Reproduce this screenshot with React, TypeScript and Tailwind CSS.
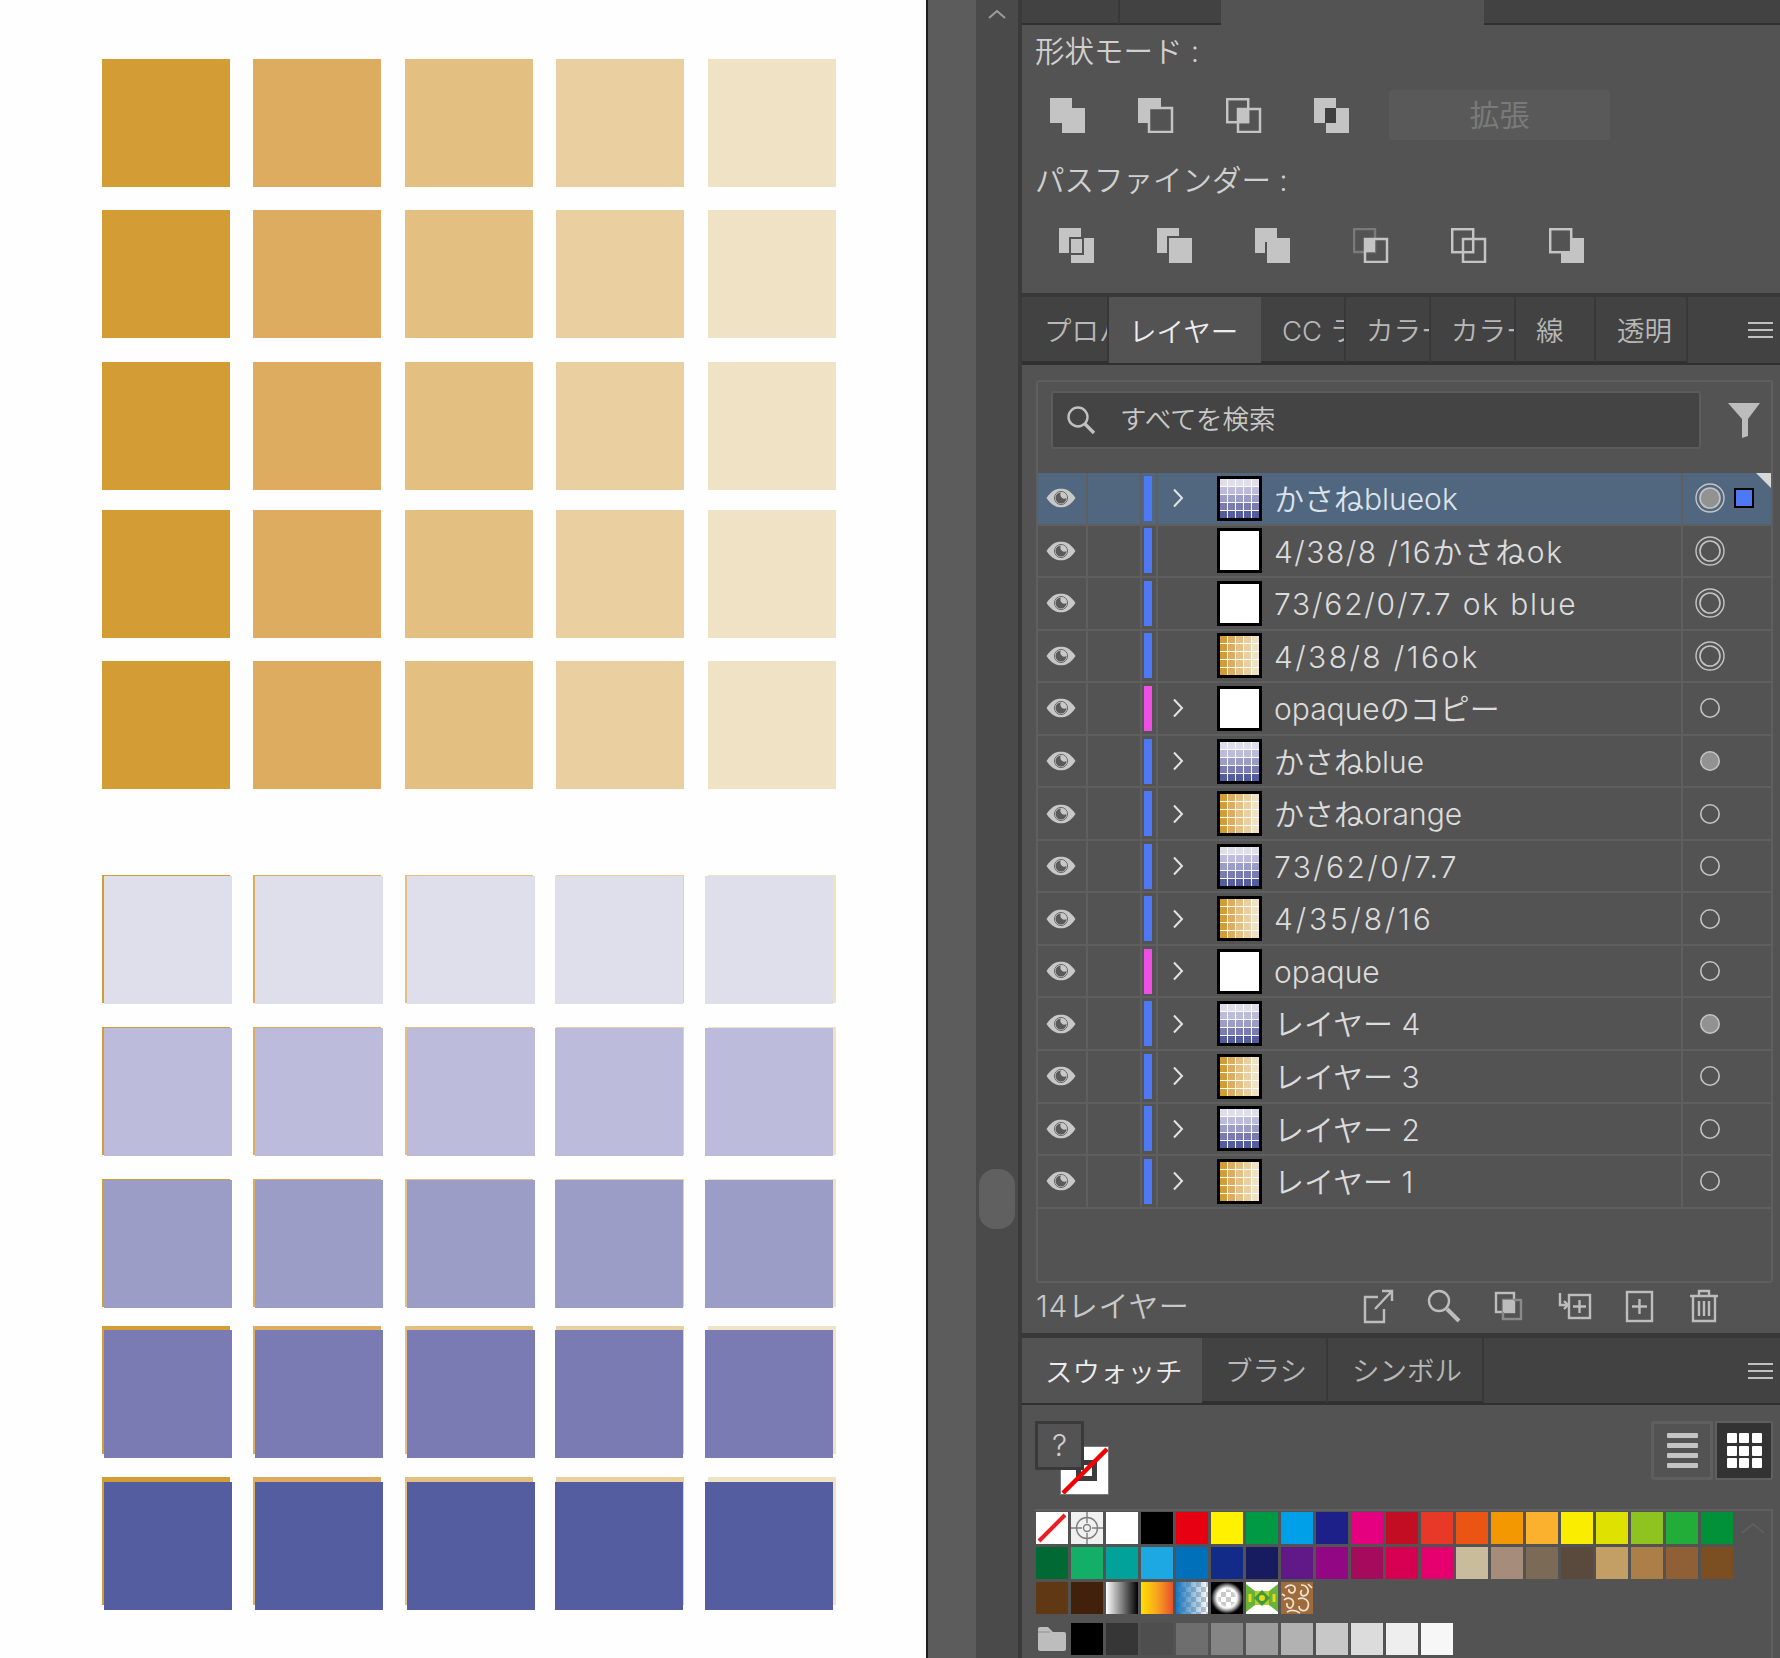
import React from "react";

const orange = ["bg-[#d49c35]", "bg-[#ddac60]", "bg-[#e3bf81]", "bg-[#eacfa0]", "bg-[#f0e2c5]"];
const blue = ["bg-[#dfdfec]", "bg-[#bdbbdb]", "bg-[#9c9dc7]", "bg-[#7a7bb3]", "bg-[#535da0]"];
const topRows = ["mt-0", "mt-[23px]", "mt-[24px]", "mt-[20px]", "mt-[23px]"];
const lowRows = [
  { mt: "mt-0", top: "top-[1px]" },
  { mt: "mt-[24px]", top: "top-[1px]" },
  { mt: "mt-[24px]", top: "top-[1px]" },
  { mt: "mt-[19px]", top: "top-[4px]" },
  { mt: "mt-[23px]", top: "top-[5px]" },
];
const lowLeft = ["left-[2px]", "left-[2px]", "left-[2px]", "left-[-1px]", "left-[-3px]"];

function Canvas() {
  return (
    <div className="w-[926px] h-full shrink-0 bg-[#fefefe] pl-[101.9px] pt-[59px]">
      {topRows.map((mt, r) => (
        <div key={r} className={`grid grid-cols-[repeat(5,128px)] gap-x-[23.5px] ${mt}`}>
          {orange.map((c, i) => (
            <div key={i} className={`h-[128px] ${c}`} />
          ))}
        </div>
      ))}
      <div className="mt-[86px]">
        {lowRows.map((row, r) => (
          <div key={r} className={`grid grid-cols-[repeat(5,128px)] gap-x-[23.5px] ${row.mt}`}>
            {orange.map((c, i) => (
              <div key={i} className={`relative h-[128px] ${c}`}>
                <div className={`absolute w-[128px] h-[128px] ${row.top} ${lowLeft[i]} ${blue[r]}`} />
              </div>
            ))}
          </div>
        ))}
      </div>
    </div>
  );
}

const L = "#c4c4c4";
const D = "#535353";

function Shape({ children }: { children: React.ReactNode }) {
  return (
    <svg width="36" height="35" viewBox="0 0 36 35" className="shrink-0">
      {children}
    </svg>
  );
}

const shapeModes = [
  <Shape key="a">
    <path d="M0 0H22V10H35V35H12V25H0Z" fill={L} />
  </Shape>,
  <Shape key="b">
    <rect x="0" y="0" width="23" height="25" fill={L} />
    <rect x="11" y="10" width="23" height="24" fill={D} stroke={L} strokeWidth="2.5" />
  </Shape>,
  <Shape key="c">
    <rect x="1.2" y="1.2" width="21" height="23" fill="none" stroke={L} strokeWidth="2.5" />
    <rect x="12" y="11" width="22" height="23" fill="none" stroke={L} strokeWidth="2.5" />
    <rect x="12" y="11" width="10" height="13" fill={L} />
  </Shape>,
  <Shape key="d">
    <path d="M0 0H22V10H35V35H12V25H0Z" fill={L} />
    <rect x="11" y="10" width="11" height="15" fill="#3f3f3f" />
  </Shape>,
];

const pathfinders = [
  <Shape key="a">
    <path d="M0 0H22V9H10V25H0Z" fill={L} />
    <path d="M25 10H35V35H12V27H25Z" fill={L} />
    <rect x="12" y="11" width="11" height="14" fill={L} />
  </Shape>,
  <Shape key="b">
    <path d="M0 0H22V8H10V25H0Z" fill={L} />
    <rect x="12" y="10" width="23" height="25" fill={L} />
  </Shape>,
  <Shape key="c">
    <path d="M0 0H22V10H35V35H12V14H10V25H0Z" fill={L} />
  </Shape>,
  <Shape key="d">
    <rect x="1" y="1" width="21" height="23" fill="none" stroke="#7a7a7a" strokeWidth="2.5" />
    <rect x="12" y="11" width="22" height="23" fill="none" stroke={L} strokeWidth="2.5" />
    <rect x="11" y="10" width="11" height="14" fill={L} />
  </Shape>,
  <Shape key="e">
    <rect x="1.2" y="1.2" width="21" height="23" fill="none" stroke={L} strokeWidth="2.5" />
    <rect x="12" y="11" width="22" height="23" fill="none" stroke={L} strokeWidth="2.5" />
    <rect x="12" y="11" width="10" height="13" fill="none" stroke={L} strokeWidth="2" />
  </Shape>,
  <Shape key="f">
    <rect x="12" y="10" width="23" height="25" fill={L} />
    <rect x="1.2" y="1.2" width="21" height="23" fill={D} stroke={L} strokeWidth="2.5" />
  </Shape>,
];

function PathfinderPanel() {
  return (
    <div className="h-[268px] bg-[#535353] pl-[13px] pt-[10px] shrink-0">
      <div className="text-[29.5px] leading-[32px] text-[#d0d0d0] font-[350]">形状モード :</div>
      <div className="flex items-center h-[50px] mt-[23px]">
        <div className="flex items-center pl-[15px] gap-[52px] w-[354px]">{shapeModes}</div>
        <div className="w-[221px] h-[50px] rounded-[3px] bg-[#595959] flex items-center justify-center text-[30px] text-[#7a7a7a]">
          拡張
        </div>
      </div>
      <div className="text-[29.5px] leading-[32px] text-[#d0d0d0] font-[350] mt-[24px]">パスファインダー :</div>
      <div className="flex items-center pl-[24px] gap-[62px] mt-[32px]">{pathfinders}</div>
    </div>
  );
}

function Tab({ w, active, children }: { w: string; active?: boolean; children: React.ReactNode }) {
  return (
    <div
      className={`${w} h-full shrink-0 overflow-hidden whitespace-nowrap flex items-center pt-[5px] ${
        active
          ? "bg-[#535353] text-[#ececec]"
          : "bg-[#424242] text-[#b8b8b8] border-r-2 border-r-[#383838] border-b-2 border-b-[#303030]"
      }`}
    >
      {children}
    </div>
  );
}

function Menu() {
  return (
    <div className="absolute right-[7px] top-1/2 -translate-y-1/2 flex flex-col gap-[5px]">
      <div className="w-[25px] h-[2px] bg-[#c0c0c0]" />
      <div className="w-[25px] h-[2px] bg-[#c0c0c0]" />
      <div className="w-[25px] h-[2px] bg-[#c0c0c0]" />
    </div>
  );
}

function Eye() {
  return (
    <svg width="30" height="20" viewBox="0 0 30 20">
      <path d="M0.5 10C6 2 10.5 0.8 15 0.8S24 2 29.5 10C24 18 19.5 19.2 15 19.2S6 18 0.5 10Z" fill="#c8c8c8" />
      <circle cx="15" cy="10" r="6.6" fill="#c8c8c8" stroke="#6c6c6c" strokeWidth="1" />
      <path d="M15 4.5A5.5 5.5 0 1 0 20.5 10A4 4 0 0 1 15 4.5Z" fill="#5a5a5a" />
    </svg>
  );
}

function Thumb({ kind }: { kind: "blue" | "orange" | "white" }) {
  const cells = Array.from({ length: 25 }, (_, i) => i);
  if (kind === "white") {
    return <div className="w-[45px] h-[45px] shrink-0 border-[3px] border-black bg-white" />;
  }
  return (
    <div className="w-[45px] h-[45px] shrink-0 border-[3px] border-black bg-white">
      <div className="grid grid-cols-5 grid-rows-5 gap-[1px] w-full h-full">
        {cells.map((i) => (
          <div key={i} className={kind === "blue" ? blue[Math.floor(i / 5)] : orange[i % 5]} />
        ))}
      </div>
    </div>
  );
}

function Target({ mode, fill }: { mode: "double" | "single"; fill?: boolean }) {
  return (
    <svg width="30" height="30" viewBox="0 0 30 30">
      {mode === "double" && <circle cx="15" cy="15" r="14" fill="none" stroke="#c4c4c4" strokeWidth="1.4" />}
      <circle
        cx="15"
        cy="15"
        r={mode === "double" ? 10 : 9.2}
        fill={fill ? "#929292" : "none"}
        stroke="#c4c4c4"
        strokeWidth="1.6"
      />
    </svg>
  );
}

type Layer = {
  name: string;
  thumb: "blue" | "orange" | "white";
  arrow: boolean;
  bar?: string;
  target: "double" | "single";
  fill?: boolean;
  spread?: string;
};

const layers: Layer[] = [
  { name: "かさねblueok", thumb: "blue", arrow: true, target: "double", fill: true },
  { name: "4/38/8 /16かさねok", thumb: "white", arrow: false, target: "double", spread: "tracking-[1.5px]" },
  { name: "73/62/0/7.7 ok blue", thumb: "white", arrow: false, target: "double", spread: "tracking-[1.8px]" },
  { name: "4/38/8 /16ok", thumb: "orange", arrow: false, target: "double", spread: "tracking-[2.4px]" },
  { name: "opaqueのコピー", thumb: "white", arrow: true, bar: "bg-[#f04fe6]", target: "single" },
  { name: "かさねblue", thumb: "blue", arrow: true, target: "single", fill: true },
  { name: "かさねorange", thumb: "orange", arrow: true, target: "single" },
  { name: "73/62/0/7.7", thumb: "blue", arrow: true, target: "single", spread: "tracking-[2.4px]" },
  { name: "4/35/8/16", thumb: "orange", arrow: true, target: "single", spread: "tracking-[2.8px]" },
  { name: "opaque", thumb: "white", arrow: true, bar: "bg-[#f04fe6]", target: "single" },
  { name: "レイヤー 4", thumb: "blue", arrow: true, target: "single", fill: true },
  { name: "レイヤー 3", thumb: "orange", arrow: true, target: "single" },
  { name: "レイヤー 2", thumb: "blue", arrow: true, target: "single" },
  { name: "レイヤー 1", thumb: "orange", arrow: true, target: "single" },
];

function LayerRow({ layer, selected }: { layer: Layer; selected: boolean }) {
  return (
    <div
      className={`relative flex items-stretch h-[52.55px] border-b-2 border-b-[#5f5f5f] ${
        selected ? "bg-[#50677f]" : "bg-[#535353]"
      }`}
    >
      <div className="w-[50px] shrink-0 flex items-center justify-center pr-[2px] border-r-2 border-r-[#5f5f5f]">
        <Eye />
      </div>
      <div className="w-[54px] shrink-0 border-r-2 border-r-[#5f5f5f]" />
      <div className="w-[16px] shrink-0 flex items-center pl-[2px] border-r-2 border-r-[#5f5f5f]">
        <div className={`w-[8px] h-[45px] ${layer.bar ?? "bg-[#4d79f5]"}`} />
      </div>
      <div className="w-[59px] shrink-0 flex items-center pl-[14px]">
        {layer.arrow && (
          <svg width="12" height="20" viewBox="0 0 12 20">
            <path d="M2 1.5L10 10L2 18.5" fill="none" stroke="#e2e2e2" strokeWidth="2" />
          </svg>
        )}
      </div>
      <div className="flex items-center shrink-0">
        <Thumb kind={layer.thumb} />
      </div>
      <div
        className={`flex-1 pl-[12px] text-[30px] leading-[52px] font-[350] whitespace-nowrap ${layer.spread ?? ""} ${
          selected ? "text-[#dde3ea]" : "text-[#dcdcdc]"
        }`}
      >
        {layer.name}
      </div>
      <div className="w-[90px] shrink-0 flex items-center pl-[12px] border-l-2 border-l-[#5f5f5f]">
        <Target mode={layer.target} fill={layer.fill} />
        {selected && <div className="ml-[9px] w-[20px] h-[20px] border-[2px] border-black bg-[#4d79f5]" />}
      </div>
      {selected && (
        <div className="absolute right-0 top-0 w-0 h-0 border-l-[15px] border-l-transparent border-t-[15px] border-t-[#d8d8d8]" />
      )}
    </div>
  );
}

function Ico({ children }: { children: React.ReactNode }) {
  return (
    <svg width="36" height="36" viewBox="0 0 36 36" fill="none" stroke="#bdbdbd" strokeWidth="2.4" className="shrink-0">
      {children}
    </svg>
  );
}

function LayersPanel() {
  return (
    <div className="h-[968px] bg-[#535353] shrink-0 flex flex-col">
      <div className="mt-[15px] ml-[14px] mr-[7px] h-[903px] rounded-[3px] border-2 border-[#5f5f5f] shrink-0">
        <div className="h-[91px] flex items-start pl-[13px] pt-[9px]">
          <div className="w-[650px] h-[58px] bg-[#444444] rounded-[3px] border-2 border-[#5c5c5c] flex items-center pl-[13px]">
            <svg width="30" height="30" viewBox="0 0 30 30" fill="none" stroke="#c0c0c0" strokeWidth="2.4">
              <circle cx="12" cy="12" r="9.5" />
              <path d="M19 19L28 28" strokeWidth="3.4" />
            </svg>
            <span className="ml-[24px] text-[26.5px] font-[350] text-[#c8c8c8]">すべてを検索</span>
          </div>
          <svg width="32" height="36" viewBox="0 0 32 36" className="ml-[27px] mt-[11px]">
            <path d="M0 1H32L20 17V34L14 36V17Z" fill="#bcbcbc" />
          </svg>
        </div>
        {layers.map((l, i) => (
          <LayerRow key={i} layer={l} selected={i === 0} />
        ))}
      </div>
      <div className="relative flex-1 flex items-start pl-[14px] text-[#c8c8c8] text-[30px] leading-[46px] font-[350] tracking-[0.6px] whitespace-nowrap">
        14レイヤー
        <div className="absolute left-[339px] top-[5px] flex items-center gap-[29px]">
          <Ico>
            <path d="M17 9H4V34H23V21" />
            <path d="M14 21L30 4M21 3H31V13" />
          </Ico>
          <Ico>
            <circle cx="13" cy="13" r="10" />
            <path d="M21 21L33 33" strokeWidth="4" />
          </Ico>
          <Ico>
            <rect x="5" y="5" width="18" height="19" fill="none" />
            <rect x="12" y="12" width="18" height="19" stroke="#8a8a8a" />
            <rect x="12" y="12" width="11" height="12" fill="#bdbdbd" stroke="none" />
          </Ico>
          <Ico>
            <path d="M4 5V17H11M8 13L12 17L8 21" />
            <rect x="13" y="7" width="21" height="23" />
            <path d="M23.5 12V25M17 18.5H30" />
          </Ico>
          <Ico>
            <rect x="6" y="4" width="25" height="29" />
            <path d="M18.5 11V26M11 18.5H26" />
          </Ico>
          <Ico>
            <path d="M4 8H32M13 8V3H23V8M7 8V33H29V8M13 13V28M18 13V28M23 13V28" />
          </Ico>
        </div>
      </div>
    </div>
  );
}

function Checks({ id }: { id: string }) {
  return (
    <pattern id={id} width="10" height="10" patternUnits="userSpaceOnUse">
      <rect width="10" height="10" fill="#fff" />
      <rect width="5" height="5" fill="#c8c8c8" />
      <rect x="5" y="5" width="5" height="5" fill="#c8c8c8" />
    </pattern>
  );
}

const row1 = [
  "bg-[#e60012]", "bg-[#fff100]", "bg-[#009944]", "bg-[#00a0e9]", "bg-[#1d2088]", "bg-[#e4007f]", "bg-[#c30d23]",
  "bg-[#e83828]", "bg-[#ea5514]", "bg-[#f39800]", "bg-[#fbb12d]", "bg-[#f9ee00]", "bg-[#dfe100]", "bg-[#8fc31f]",
  "bg-[#22ac38]", "bg-[#009139]",
];
const row2 = [
  "bg-[#006934]", "bg-[#13ae67]", "bg-[#00a29a]", "bg-[#1da7e3]", "bg-[#0070bb]", "bg-[#122a88]", "bg-[#171c61]",
  "bg-[#601986]", "bg-[#920783]", "bg-[#a40b5d]", "bg-[#d60050]", "bg-[#e5006e]", "bg-[#c9bc9c]", "bg-[#a68c7b]",
  "bg-[#7b6a56]", "bg-[#594a3d]", "bg-[#c49f65]", "bg-[#ab7f47]", "bg-[#8f5f35]", "bg-[#7c4f22]",
];
const greys = [
  "bg-[#000000]", "bg-[#363636]", "bg-[#4e4e4e]", "bg-[#6e6e6e]", "bg-[#858585]", "bg-[#9c9c9c]", "bg-[#b2b2b2]",
  "bg-[#c8c8c8]", "bg-[#dcdcdc]", "bg-[#eeeeee]", "bg-[#f7f7f7]",
];

function Sw({ c }: { c: string }) {
  return <div className={`w-[32px] h-[32px] shrink-0 ${c}`} />;
}

function SwatchesPanel() {
  return (
    <div className="flex-1 bg-[#535353] relative pl-[13px]">
      <div className="relative h-[104px]">
        {/* fill / stroke proxy */}
        <div className="absolute left-[25px] top-[41px] w-[49px] h-[49px] bg-white border border-[#7a7a7a] overflow-hidden">
          <div className="absolute left-[15px] top-[13px] w-[21px] h-[21px] border-[5px] border-[#3d3d3d]" />
          <svg width="49" height="49" viewBox="0 0 49 49" className="absolute left-0 top-0">
            <path d="M2 46L46 2" stroke="#f00000" strokeWidth="4.5" />
          </svg>
        </div>
        <div className="absolute left-0 top-[16px] w-[49px] h-[49px] bg-[#535353] border-[3px] border-[#3a3a3a] flex items-center justify-center text-[30px] font-[350] text-[#cfcfcf]">
          ?
        </div>
        <div className="absolute right-[7px] top-[16px] flex gap-[2px]">
          <div className="w-[62px] h-[59px] border-[3px] border-[#5f5f5f] rounded-l-[3px] flex flex-col items-center justify-center gap-[5.5px]">
            <div className="w-[31px] h-[4.5px] rounded-[1px] bg-[#c4c4c4]" />
            <div className="w-[31px] h-[4.5px] rounded-[1px] bg-[#c4c4c4]" />
            <div className="w-[31px] h-[4.5px] rounded-[1px] bg-[#c4c4c4]" />
            <div className="w-[31px] h-[4.5px] rounded-[1px] bg-[#c4c4c4]" />
          </div>
          <div className="w-[58px] h-[59px] bg-[#333333] border-2 border-[#5f5f5f] rounded-r-[3px] flex items-center justify-center">
            <div className="grid grid-cols-3 gap-[2.5px]">
              {Array.from({ length: 9 }, (_, i) => (
                <div key={i} className="w-[10px] h-[10px] rounded-[1px] bg-white" />
              ))}
            </div>
          </div>
        </div>
      </div>
      <div className="relative mr-[7px] h-[152px] border-t-2 border-r-2 border-[#5f5f5f] pt-[1px] pl-[1px]">
        <svg width="26" height="14" viewBox="0 0 26 14" className="absolute right-[5px] top-[10px]">
          <path d="M2 12L13 3L24 12" fill="none" stroke="#5f5f5f" strokeWidth="2" />
        </svg>
        <div className="flex gap-[3px]">
          <div className="relative w-[32px] h-[32px] bg-white shrink-0">
            <svg width="32" height="32" viewBox="0 0 32 32" className="absolute inset-0">
              <path d="M3 29L29 3" stroke="#ee1c25" strokeWidth="4" />
            </svg>
          </div>
          <div className="w-[32px] h-[32px] bg-[#f0f0f0] shrink-0">
            <svg width="32" height="32" viewBox="0 0 32 32" fill="none" stroke="#7d7d7d" strokeWidth="1.4">
              <circle cx="16" cy="16" r="10.5" />
              <circle cx="16" cy="16" r="3.5" />
              <path d="M16 0V11M16 21V32M0 16H11M21 16H32" />
            </svg>
          </div>
          <Sw c="bg-white" />
          <Sw c="bg-black" />
          {row1.map((c) => (
            <Sw key={c} c={c} />
          ))}
        </div>
        <div className="flex gap-[3px] mt-[3px]">
          {row2.map((c) => (
            <Sw key={c} c={c} />
          ))}
        </div>
        <div className="flex gap-[3px] mt-[3px]">
          <Sw c="bg-[#603813]" />
          <Sw c="bg-[#42210b]" />
          <Sw c="bg-[linear-gradient(90deg,#ffffff,#000000)]" />
          <Sw c="bg-[linear-gradient(90deg,#ffe000,#f7a51e,#e8502f)]" />
          <svg width="32" height="32" viewBox="0 0 32 32" className="shrink-0">
            <defs>
              <Checks id="chk1" />
              <linearGradient id="blueFade">
                <stop offset="0" stopColor="#1b75bc" />
                <stop offset="1" stopColor="#1b75bc" stopOpacity="0" />
              </linearGradient>
            </defs>
            <rect width="32" height="32" fill="url(#chk1)" />
            <rect width="32" height="32" fill="url(#blueFade)" />
          </svg>
          <svg width="32" height="32" viewBox="0 0 32 32" className="shrink-0">
            <defs>
              <Checks id="chk2" />
              <radialGradient id="glow">
                <stop offset="0.45" stopColor="#fff" stopOpacity="0" />
                <stop offset="0.62" stopColor="#fff" stopOpacity="0.9" />
                <stop offset="1" stopColor="#000" />
              </radialGradient>
            </defs>
            <rect width="32" height="32" fill="black" />
            <circle cx="16" cy="16" r="14" fill="url(#chk2)" />
            <rect width="32" height="32" fill="url(#glow)" />
          </svg>
          <svg width="32" height="32" viewBox="0 0 32 32" className="shrink-0">
            <rect width="32" height="32" fill="#fff" />
            <path d="M0 2L9 9V23L0 30ZM32 2L23 9V23L32 30Z" fill="#68b338" />
            <rect x="9" y="9" width="14" height="14" fill="#b5cf2a" />
            <path d="M16 8L24 16L16 24L8 16Z" fill="#3f9a3c" />
            <circle cx="16" cy="16" r="3" fill="#e5d81f" />
            <path d="M4 12V20M28 12V20" stroke="#e5d81f" strokeWidth="3" />
          </svg>
          <svg width="32" height="32" viewBox="0 0 32 32" className="shrink-0">
            <rect width="32" height="32" fill="#9d6b3c" />
            <path
              d="M4 6C8 1 15 3 14 8S7 11 8 7M20 3C27 3 29 10 25 13S18 11 21 8M3 18C7 14 14 17 12 23S5 25 6 21M17 17C23 14 29 19 27 25S18 29 18 24M6 30C11 27 16 29 19 31M27 2L31 6M1 12L4 14"
              fill="none"
              stroke="#f1e3d3"
              strokeWidth="1.7"
            />
          </svg>
        </div>
        <div className="flex gap-[3px] mt-[9px]">
          <svg width="32" height="32" viewBox="0 0 32 32" className="shrink-0">
            <path d="M2 6Q2 4 4 4H12L17 9H28Q30 9 30 11V26Q30 28 28 28H4Q2 28 2 26Z" fill="#bdbdbd" />
            <path d="M2 9H14" stroke="#8e8e8e" strokeWidth="1" />
          </svg>
          {greys.map((c) => (
            <Sw key={c} c={c} />
          ))}
        </div>
      </div>
    </div>
  );
}

export default function App() {
  return (
    <div
      className="flex w-[1780px] h-[1658px] overflow-hidden bg-[#535353]"
      style={{ fontFamily: 'Inter, "Noto Sans CJK JP", "Noto Sans", sans-serif' }}
    >
      <Canvas />
      <div className="w-[2px] h-full shrink-0 bg-[#1e1e1e]" />
      <div className="w-[48px] h-full shrink-0 bg-[#5c5c5c]" />
      {/* scroll column */}
      <div className="w-[42px] h-full shrink-0 bg-[#4a4a4a] flex flex-col items-center">
        <svg width="20" height="12" viewBox="0 0 20 12" className="mt-[8px] shrink-0">
          <path d="M2 10L10 3L18 10" fill="none" stroke="#9c9c9c" strokeWidth="2" />
        </svg>
        <div className="mt-[1149px] w-[36px] h-[60px] rounded-[16px] bg-[#606060]" />
      </div>
      <div className="w-[4px] h-full shrink-0 bg-[#3a3a3a]" />
      <div className="flex-1 flex flex-col min-w-0">
        <div className="h-[25px] flex shrink-0">
          <div className="w-[98px] h-full bg-[#424242] border-r-2 border-r-[#383838] border-b-2 border-b-[#303030]" />
          <div className="w-[101px] h-full bg-[#424242] border-b-2 border-b-[#303030]" />
          <div className="w-[263px] h-full bg-[#535353]" />
          <div className="flex-1 h-full bg-[#424242] border-b-2 border-b-[#303030]" />
        </div>
        <PathfinderPanel />
        <div className="h-[4px] bg-[#383838] shrink-0" />
        <div className="relative h-[68px] flex bg-[#424242] text-[27.5px] font-[350] shrink-0 border-b-2 border-b-[#303030]">
          <Tab w="w-[87px]"><span className="pl-[22px]">プロパ</span></Tab>
          <Tab w="w-[152px]" active><span className="pl-[20px]">レイヤー</span></Tab>
          <Tab w="w-[85px]"><span className="pl-[21px]">CC ラ</span></Tab>
          <Tab w="w-[85px]"><span className="pl-[20px]">カラー</span></Tab>
          <Tab w="w-[85px]"><span className="pl-[20px]">カラー</span></Tab>
          <Tab w="w-[80px]"><span className="pl-[20px]">線</span></Tab>
          <Tab w="w-[92px]"><span className="pl-[21px]">透明</span></Tab>
          <Menu />
        </div>
        <LayersPanel />
        <div className="h-[5px] bg-[#383838] shrink-0" />
        <div className="relative h-[67px] flex bg-[#424242] text-[27.5px] font-[350] shrink-0 border-b-2 border-b-[#303030]">
          <Tab w="w-[180px]" active><span className="pl-[23px]">スウォッチ</span></Tab>
          <Tab w="w-[126px]"><span className="pl-[23px]">ブラシ</span></Tab>
          <Tab w="w-[156px]"><span className="pl-[24px]">シンボル</span></Tab>
          <Menu />
        </div>
        <SwatchesPanel />
      </div>
    </div>
  );
}
